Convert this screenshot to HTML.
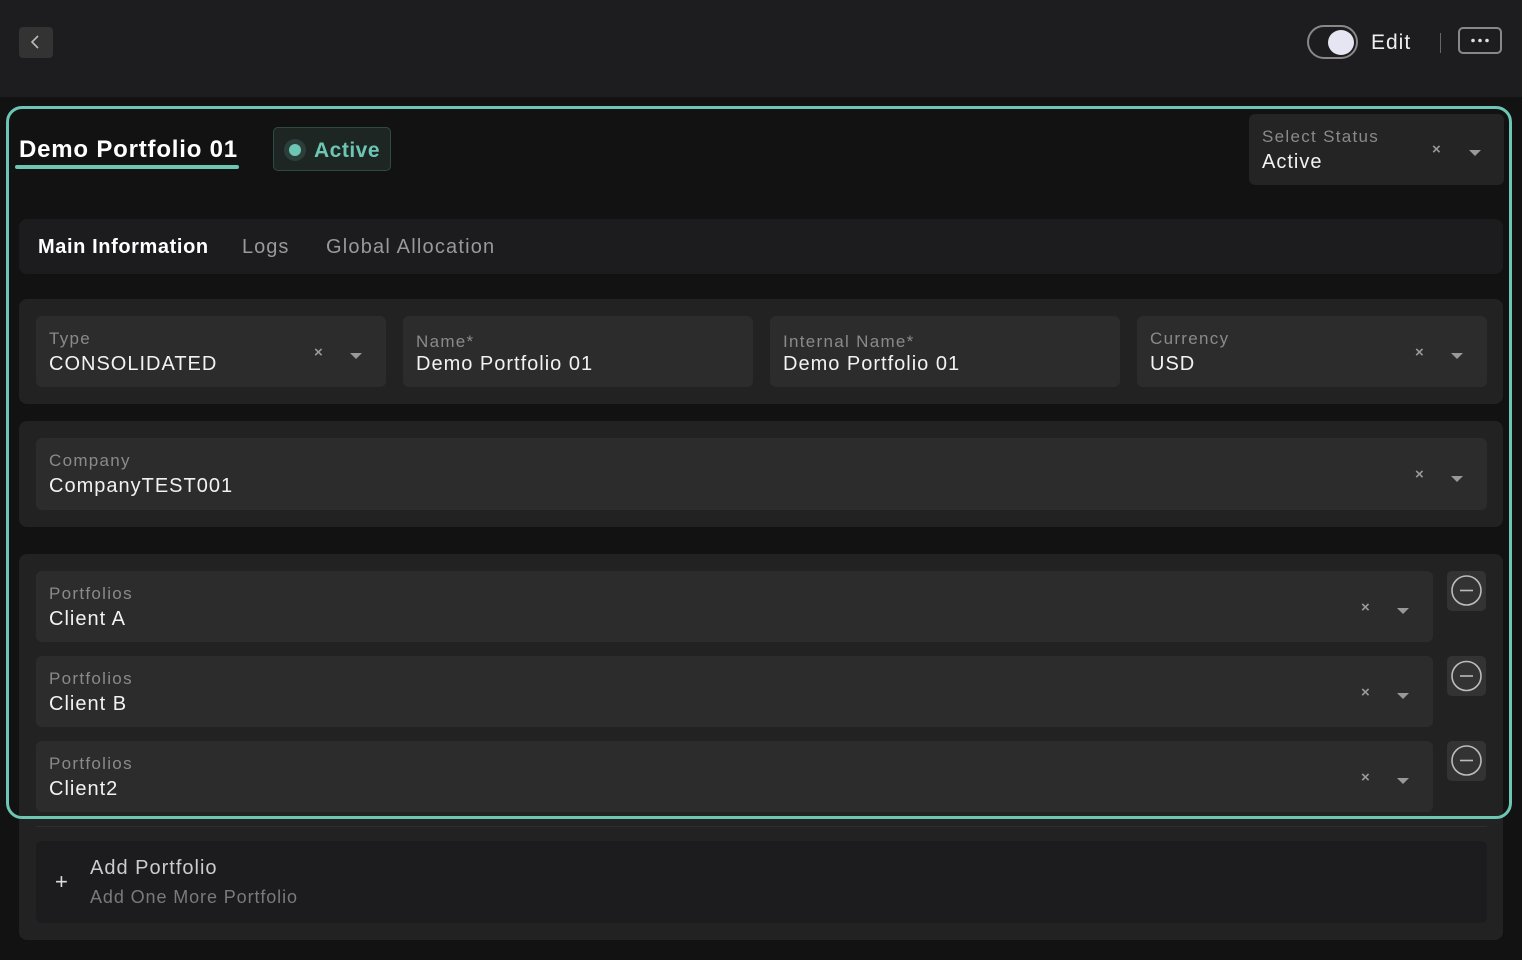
<!DOCTYPE html>
<html><head><style>
*{box-sizing:border-box;margin:0;padding:0}
body{width:1522px;height:960px;background:#121212;font-family:"Liberation Sans",sans-serif;position:relative;overflow:hidden;color:#fff}
.abs{position:absolute}
.top{left:0;top:0;width:1522px;height:97px;background:#1d1d1f}
.sec{background:#222;border-radius:8px}
.f{background:#2c2c2c;border-radius:6px}
.lbl{position:absolute;left:13px;top:13px;font-size:17px;color:#8a8a8a;letter-spacing:1.3px}
.val{position:absolute;left:13px;top:37px;font-size:20px;color:#f2f2f2;letter-spacing:1px}
.x{position:absolute;font-size:15px;color:#999;font-weight:bold}
.car{position:absolute;width:0;height:0;border-left:6px solid transparent;border-right:6px solid transparent;border-top:6px solid #999}
.minus{background:#333;border-radius:5px;width:39px;height:40px}
</style></head><body>
<div class="abs top"></div>
<div class="abs" style="left:19px;top:27px;width:34px;height:31px;background:#333;border-radius:4px"></div>
<svg class="abs" style="left:28px;top:33px" width="16" height="18"><path d="M10 3 L4 9 L10 15" stroke="#bbb" stroke-width="1.6" fill="none"/></svg>
<div class="abs" style="left:1307px;top:25px;width:51px;height:34px;border:2px solid #888;border-radius:17px"></div>
<div class="abs" style="left:1328px;top:30px;width:26px;height:25px;background:#e6e6f2;border-radius:50%"></div>
<div class="abs" style="left:1371px;top:31px;font-size:21px;color:#eee;letter-spacing:1px">Edit</div>
<div class="abs" style="left:1440px;top:33px;width:1px;height:20px;background:#666"></div>
<div class="abs" style="left:1458px;top:27px;width:44px;height:27px;border:2px solid #888;border-radius:5px"></div>
<svg class="abs" style="left:1458px;top:27px" width="44" height="27"><circle cx="15" cy="13.5" r="1.8" fill="#ddd"/><circle cx="22" cy="13.5" r="1.8" fill="#ddd"/><circle cx="29" cy="13.5" r="1.8" fill="#ddd"/></svg>

<div class="abs" style="left:19px;top:219px;width:1484px;height:55px;background:#1c1c1e;border-radius:8px"></div>
<div class="abs" style="left:38px;top:236px;font-size:20px;font-weight:bold;color:#fff;letter-spacing:0.6px">Main Information</div>
<div class="abs" style="left:242px;top:236px;font-size:20px;color:#999;letter-spacing:1px">Logs</div>
<div class="abs" style="left:326px;top:236px;font-size:20px;color:#999;letter-spacing:1.2px">Global Allocation</div>

<div class="abs" style="left:19px;top:136px;font-size:24px;font-weight:bold;letter-spacing:0.8px">Demo Portfolio 01</div>
<div class="abs" style="left:15px;top:165px;width:224px;height:4px;background:#6cc6b3;border-radius:2px"></div>
<div class="abs" style="left:273px;top:127px;width:118px;height:44px;background:#1e2624;border:1.5px solid #2e4a44;border-radius:5px"></div>
<div class="abs" style="left:284px;top:139px;width:22px;height:22px;background:#2c3e3a;border-radius:50%"></div>
<div class="abs" style="left:289px;top:144px;width:12px;height:12px;background:#6cc6b3;border-radius:50%"></div>
<div class="abs" style="left:314px;top:139px;font-size:21px;font-weight:bold;color:#6cc6b3;letter-spacing:0.5px">Active</div>

<div class="abs f" style="left:1249px;top:114px;width:255px;height:71px;background:#242424"><div class="lbl">Select Status</div><div class="val">Active</div><div class="x" style="left:183px;top:27px">×</div><div class="car" style="left:220px;top:36px"></div></div>

<div class="abs sec" style="left:19px;top:299px;width:1484px;height:105px"></div>
<div class="abs f" style="left:36px;top:316px;width:350px;height:71px"><div class="lbl">Type</div><div class="val">CONSOLIDATED</div><div class="x" style="left:278px;top:28px">×</div><div class="car" style="left:314px;top:37px"></div></div>
<div class="abs f" style="left:403px;top:316px;width:350px;height:71px"><div class="lbl" style="top:16px">Name*</div><div class="val">Demo Portfolio 01</div></div>
<div class="abs f" style="left:770px;top:316px;width:350px;height:71px"><div class="lbl" style="top:16px">Internal Name*</div><div class="val">Demo Portfolio 01</div></div>
<div class="abs f" style="left:1137px;top:316px;width:350px;height:71px"><div class="lbl">Currency</div><div class="val">USD</div><div class="x" style="left:278px;top:28px">×</div><div class="car" style="left:314px;top:37px"></div></div>

<div class="abs sec" style="left:19px;top:421px;width:1484px;height:106px"></div>
<div class="abs f" style="left:36px;top:438px;width:1451px;height:72px"><div class="lbl">Company</div><div class="val">CompanyTEST001</div><div class="x" style="left:1379px;top:28px">×</div><div class="car" style="left:1415px;top:38px"></div></div>

<div class="abs sec" style="left:19px;top:554px;width:1484px;height:386px"></div>
<div class="abs f" style="left:36px;top:571px;width:1397px;height:71px"><div class="lbl">Portfolios</div><div class="val">Client A</div><div class="x" style="left:1325px;top:28px">×</div><div class="car" style="left:1361px;top:37px"></div></div>
<div class="abs f" style="left:36px;top:656px;width:1397px;height:71px"><div class="lbl">Portfolios</div><div class="val">Client B</div><div class="x" style="left:1325px;top:28px">×</div><div class="car" style="left:1361px;top:37px"></div></div>
<div class="abs f" style="left:36px;top:741px;width:1397px;height:71px"><div class="lbl">Portfolios</div><div class="val">Client2</div><div class="x" style="left:1325px;top:28px">×</div><div class="car" style="left:1361px;top:37px"></div></div>
<div class="abs minus" style="left:1447px;top:571px"><svg width="39" height="40"><circle cx="19.5" cy="19.5" r="14.5" stroke="#bbb" stroke-width="1.6" fill="none"/><path d="M13 19.5H26" stroke="#bbb" stroke-width="1.6"/></svg></div>
<div class="abs minus" style="left:1447px;top:656px"><svg width="39" height="40"><circle cx="19.5" cy="20" r="14.5" stroke="#bbb" stroke-width="1.6" fill="none"/><path d="M13 20H26" stroke="#bbb" stroke-width="1.6"/></svg></div>
<div class="abs minus" style="left:1447px;top:741px"><svg width="39" height="40"><circle cx="19.5" cy="19.5" r="14.5" stroke="#bbb" stroke-width="1.6" fill="none"/><path d="M13 19.5H26" stroke="#bbb" stroke-width="1.6"/></svg></div>

<div class="abs" style="left:36px;top:826px;width:1451px;height:1px;background:#2e2e2e"></div>
<div class="abs" style="left:36px;top:841px;width:1451px;height:82px;background:#1c1c1e;border-radius:6px"></div>
<div class="abs" style="left:55px;top:869px;font-size:22px;color:#ddd">+</div>
<div class="abs" style="left:90px;top:857px;font-size:20px;color:#ccc;letter-spacing:1px">Add Portfolio</div>
<div class="abs" style="left:90px;top:887px;font-size:18px;color:#7a7a7a;letter-spacing:0.9px">Add One More Portfolio</div>

<div class="abs" style="left:6px;top:106px;width:1506px;height:713px;border:3px solid #6cc6b3;border-radius:16px"></div>
</body></html>
